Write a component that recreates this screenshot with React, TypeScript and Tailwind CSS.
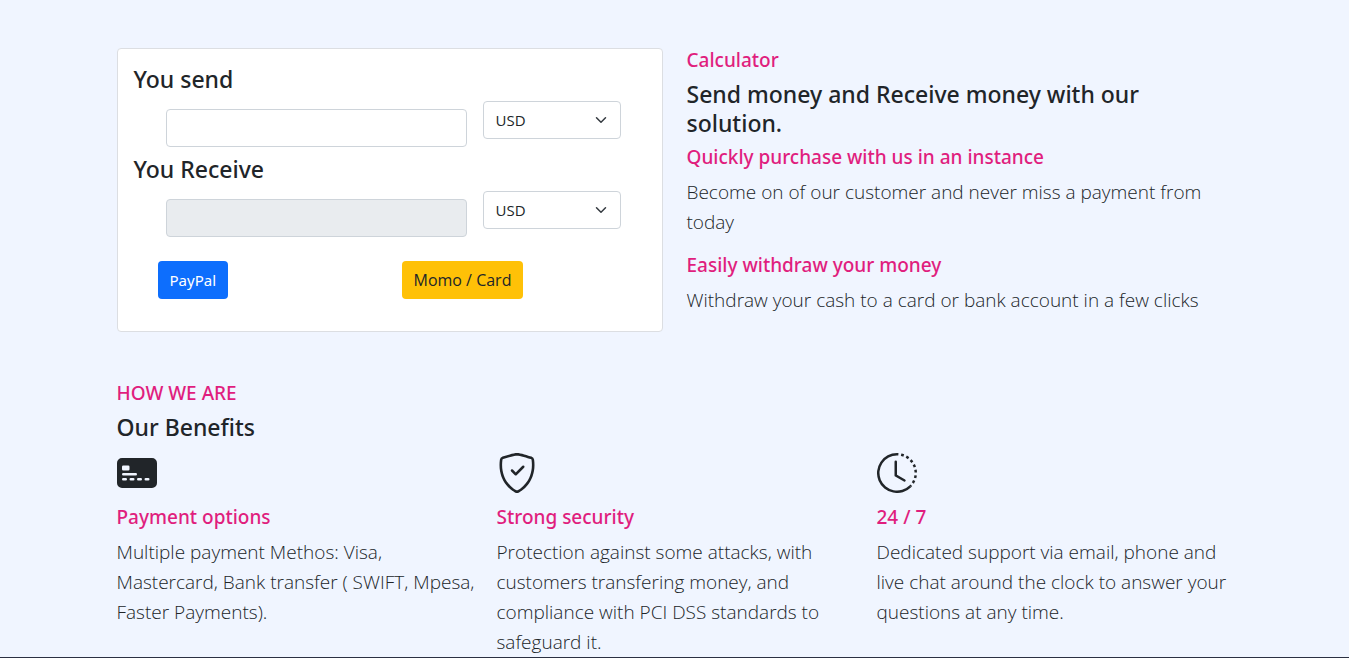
import { useId, useState, type ReactNode } from "react";
import { BsClockHistory, BsCreditCard2FrontFill, BsShieldCheck } from "react-icons/bs";

const currencies = ["USD", "EUR", "GBP", "KES"];

function Title({ children }: { children: ReactNode }) {
  return (
    <h2 className="mb-[7px] font-['Noto_Sans',sans-serif] text-[23px] leading-[29px] font-medium text-[#212529]">
      {children}
    </h2>
  );
}

function Accent({ children }: { children: ReactNode }) {
  return (
    <h3 className="mb-2 font-['Noto_Sans',sans-serif] text-[19px] leading-6 font-medium text-[#e01e7e]">
      {children}
    </h3>
  );
}

function Lead({ children }: { children: ReactNode }) {
  return <p className="text-[19px] leading-[30px] font-light text-[#212529]">{children}</p>;
}

type AmountProps = {
  label: string;
  value: string;
  readOnly?: boolean;
  onChange?: (value: string) => void;
};

function AmountRow({ label, value, readOnly, onChange }: AmountProps) {
  const id = useId();
  return (
    <div className="mb-2">
      <Title>
        <label htmlFor={id}>{label}</label>
      </Title>
      <div className="flex items-start gap-4 pr-[25px] pl-8">
        <input
          id={id}
          value={value}
          readOnly={readOnly}
          onChange={(e) => onChange?.(e.target.value)}
          className={
            "mt-2 h-[38px] min-w-0 flex-1 rounded border border-[#ced4da] px-3 text-base " +
            (readOnly ? "bg-[#e9ecef]" : "bg-white")
          }
        />
        <div className="grid w-[138px] items-center">
          <select
            aria-label={`${label} currency`}
            className="col-start-1 row-start-1 h-[38px] appearance-none rounded border border-[#ced4da] bg-white px-3 text-[15px] text-[#212529]"
          >
            {currencies.map((c) => (
              <option key={c}>{c}</option>
            ))}
          </select>
          <svg
            viewBox="0 0 16 16"
            className="pointer-events-none col-start-1 row-start-1 mr-3 h-3 w-4 justify-self-end"
            fill="none"
            stroke="#343a40"
            strokeLinecap="round"
            strokeLinejoin="round"
            strokeWidth="2"
            aria-hidden="true"
          >
            <path d="m2 5 6 6 6-6" />
          </svg>
        </div>
      </div>
    </div>
  );
}

const benefits = [
  {
    icon: BsCreditCard2FrontFill,
    title: "Payment options",
    text: "Multiple payment Methos: Visa, Mastercard, Bank transfer ( SWIFT, Mpesa, Faster Payments).",
  },
  {
    icon: BsShieldCheck,
    title: "Strong security",
    text: "Protection against some attacks, with customers transfering money, and compliance with PCI DSS standards to safeguard it.",
  },
  {
    icon: BsClockHistory,
    title: "24 / 7",
    text: "Dedicated support via email, phone and live chat around the clock to answer your questions at any time.",
  },
];

export default function App() {
  const [amount, setAmount] = useState("");
  return (
    <div className="border-b border-[#2b3042] bg-[#f0f5ff] font-['Open_Sans',sans-serif]">
      <main className="mx-auto max-w-[1140px] px-3 pt-12">
        <section className="grid gap-6 md:grid-cols-2">
          <form
            className="rounded border border-[#dcdee2] bg-white px-4 pt-4 pb-8"
            onSubmit={(e) => e.preventDefault()}
          >
            <AmountRow label="You send" value={amount} onChange={setAmount} />
            <AmountRow label="You Receive" value={amount} readOnly />
            <div className="grid grid-cols-2 pt-4 pl-6">
              <div>
                <button
                  type="submit"
                  className="h-[38px] rounded bg-[#0d6efd] px-3 font-['Noto_Sans',sans-serif] text-[15px] text-white"
                >
                  PayPal
                </button>
              </div>
              <div>
                <button
                  type="submit"
                  className="h-[38px] rounded bg-[#ffc107] px-3 text-base text-[#212529]"
                >
                  Momo / Card
                </button>
              </div>
            </div>
          </form>
          <div className="pr-3">
            <Accent>Calculator</Accent>
            <Title>Send money and Receive money with our solution.</Title>
            <Accent>Quickly purchase with us in an instance</Accent>
            <div className="mb-4">
              <Lead>Become on of our customer and never miss a payment from today</Lead>
            </div>
            <Accent>Easily withdraw your money</Accent>
            <Lead>Withdraw your cash to a card or bank account in a few clicks</Lead>
          </div>
        </section>
        <section className="pt-[49px]">
          <Accent>HOW WE ARE</Accent>
          <Title>Our Benefits</Title>
          <div className="grid md:-mr-6 md:grid-cols-3">
            {benefits.map(({ icon: Icon, title, text }) => (
              <article key={title} className="pr-4">
                <Icon className="mt-1 mb-3 size-10 text-[#212529]" aria-hidden="true" />
                <Accent>{title}</Accent>
                <Lead>{text}</Lead>
              </article>
            ))}
          </div>
        </section>
      </main>
    </div>
  );
}
